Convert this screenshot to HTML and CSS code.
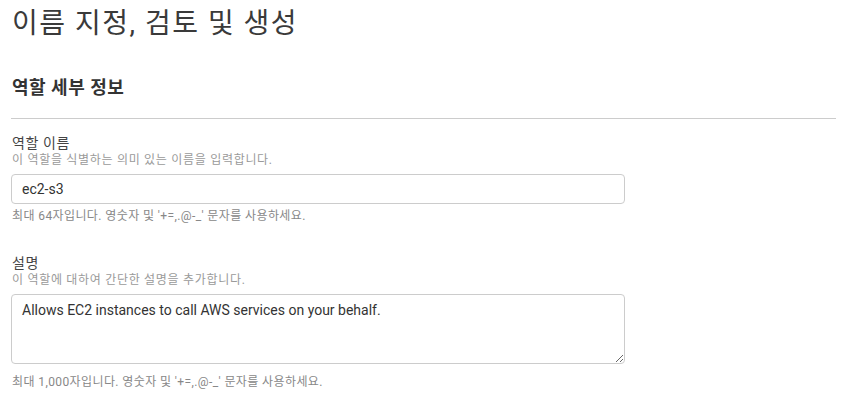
FILE: index.html
```html
<!DOCTYPE html>
<html lang="ko">
<head>
<meta charset="utf-8">
<link rel="stylesheet" href="styles.css">
</head>
<body>
<div class="page">
  <h1 class="title">이름 지정, 검토 및 생성</h1>
  <h2 class="section">역할 세부 정보</h2>
  <hr class="divider">
  <div class="field">
    <div class="label">역할 이름</div>
    <div class="help">이 역할을 식별하는 의미 있는 이름을 입력합니다.</div>
    <input class="input" type="text" value="ec2-s3">
    <div class="hint">최대 64자입니다. 영숫자 및 '+=,.@-_' 문자를 사용하세요.</div>
  </div>
  <div class="field field-desc">
    <div class="label">설명</div>
    <div class="help">이 역할에 대하여 간단한 설명을 추가합니다.</div>
    <textarea class="textarea">Allows EC2 instances to call AWS services on your behalf.</textarea>
    <div class="hint hint-desc">최대 1,000자입니다. 영숫자 및 '+=,.@-_' 문자를 사용하세요.</div>
  </div>
</div>
</body>
</html>
```
FILE: styles.css
```css
html, body {
  margin: 0;
  padding: 0;
  background: #fff;
}
body {
  font-family: Roboto, "Noto Sans CJK KR", sans-serif;
  color: #333;
}
.page {
  padding: 0 12px 0 11px;
}
.title {
  margin: 0;
  padding-top: 6px;
  font-size: 28px;
  font-weight: 400;
  line-height: 36px;
  letter-spacing: 1.5px;
  color: #3a3a3a;
  padding-left: 1px;
}
.section {
  margin: 34px 0 0 0;
  font-size: 18px;
  font-weight: 700;
  line-height: 24px;
  letter-spacing: 0.5px;
  color: #333;
  padding-left: 1px;
}
.divider {
  margin: 18px 0 0 0;
  border: 0;
  border-top: 1px solid #ccc;
  height: 0;
}
.field {
  margin-top: 15px;
  display: flex;
  flex-direction: column;
}
.field-desc {
  margin-top: 29px;
}
.label {
  font-size: 14px;
  line-height: 18px;
  letter-spacing: 0.6px;
  color: #444;
  padding-left: 1px;
}
.help {
  font-size: 12px;
  line-height: 17px;
  letter-spacing: 0.7px;
  color: #9a9a9a;
  padding-left: 1px;
}
.input, .textarea {
  box-sizing: border-box;
  width: 614px;
  border: 1px solid #ccc;
  border-radius: 4px;
  font-family: Roboto, "Noto Sans CJK KR", sans-serif;
  font-size: 14px;
  color: #333;
  padding: 0 10px;
  margin: 0;
  outline: none;
}
.input {
  height: 30px;
  margin-top: 5px;
}
.textarea {
  height: 70px;
  margin-top: 5px;
  padding-top: 6px;
  resize: vertical;
  display: block;
  line-height: 18px;
}
.hint {
  font-size: 12px;
  line-height: 17px;
  letter-spacing: 0.4px;
  color: #888;
  margin-top: 4px;
  padding-left: 1px;
}
.hint-desc {
  margin-top: 10px;
}
```
